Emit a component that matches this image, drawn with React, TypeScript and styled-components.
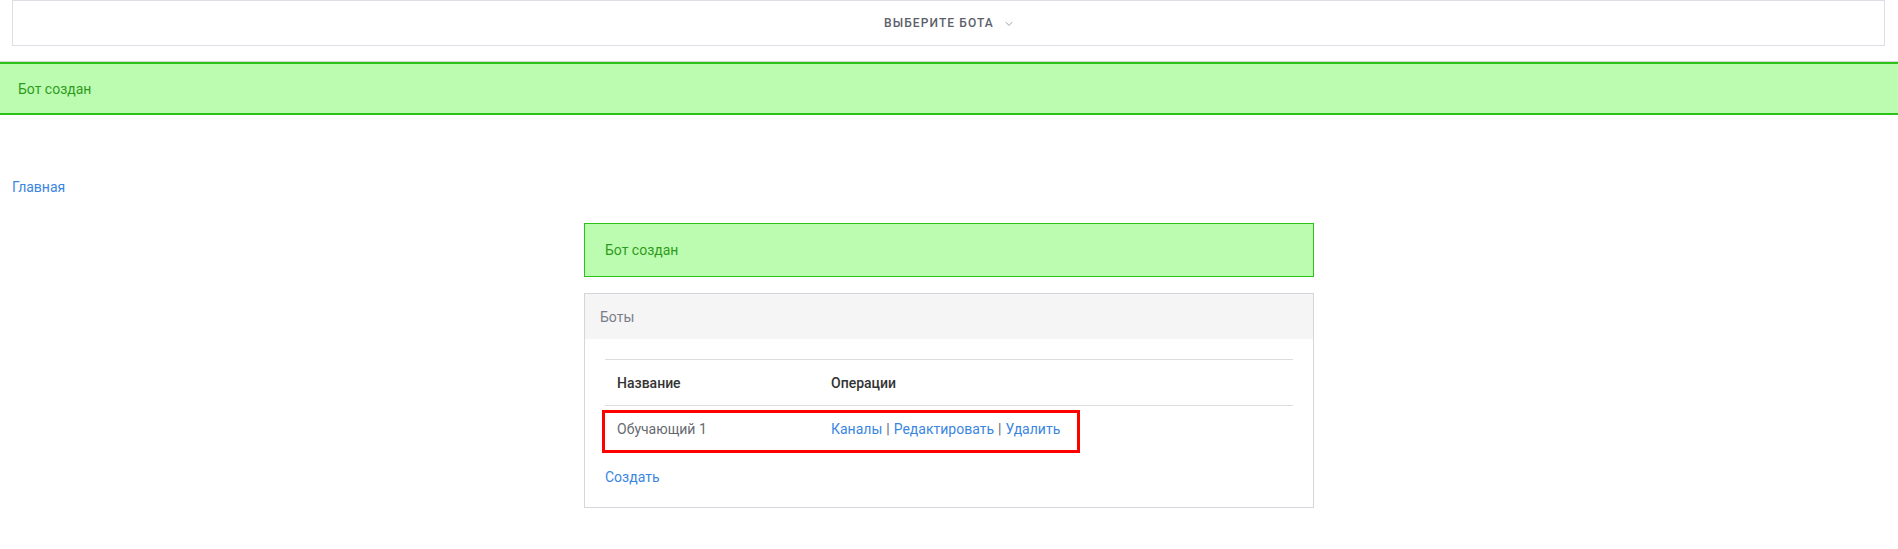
import React from "react";
import styled, { createGlobalStyle } from "styled-components";

const Global = createGlobalStyle`
  html, body { margin: 0; padding: 0; background: #fff; }
  body { font-family: Roboto, "Noto Sans", "Liberation Sans", sans-serif; font-size: 14px; color: #333; }
  * { box-sizing: border-box; }
`;

const TopBar = styled.div`
  margin: 0 13px 0 12px;
  height: 46px;
  border: 1px solid #dcdfe3;
  display: flex;
  align-items: center;
  justify-content: center;
  gap: 11px;
`;

const BotSelect = styled.span`
  font-size: 12px;
  font-weight: 500;
  letter-spacing: 1.1px;
  text-transform: uppercase;
  color: #5b606b;
  line-height: 1;
`;

const Chevron = styled.svg`
  width: 8px;
  height: 6px;
  margin-top: 1px;
`;

const Flash = styled.div`
  margin-top: 16px;
  height: 53px;
  background: #bcfcb0;
  border-top: 2px solid #2cc21a;
  border-bottom: 2px solid #2cc21a;
  box-shadow: 0 -1px 0 #d6d6d6;
  display: flex;
  align-items: center;
  padding-left: 18px;
  color: #2f9b1c;
`;

const Breadcrumb = styled.a`
  display: block;
  margin: 62px 0 0 12px;
  width: max-content;
  line-height: 20px;
  color: #3a86df;
  text-decoration: none;
`;

const Container = styled.div`
  width: 730px;
  margin: 26px auto 0;
  display: flex;
  flex-direction: column;
  gap: 16px;
`;

const Alert = styled.div`
  height: 54px;
  background: #bcfcb0;
  border: 1px solid #2cc21a;
  display: flex;
  align-items: center;
  padding-left: 20px;
  color: #2f9b1c;
`;

const Panel = styled.div`
  border: 1px solid #d3d6da;
`;

const PanelHeading = styled.div`
  height: 45px;
  background: #f5f5f5;
  display: flex;
  align-items: center;
  padding-left: 15px;
  color: #7a7e88;
`;

const PanelBody = styled.div`
  padding: 20px;
`;

const Table = styled.div`
  position: relative;
  border-top: 1px solid #dddddd;
`;

const Row = styled.div<{ $head?: boolean }>`
  display: grid;
  grid-template-columns: 214px 1fr;
  height: ${(p) => (p.$head ? "46px" : "45px")};
  align-items: center;
  border-bottom: ${(p) => (p.$head ? "1px solid #dddddd" : "none")};
  color: ${(p) => (p.$head ? "#333" : "#666a70")};
  font-weight: ${(p) => (p.$head ? 500 : 400)};
`;

const Cell = styled.div`
  padding-left: 12px;
  white-space: nowrap;
`;

const Link = styled.a`
  color: #3a86df;
  text-decoration: none;
`;

const Sep = styled.span`
  color: #666a70;
  margin: 0 4px;
`;

const Highlight = styled.div`
  position: absolute;
  left: -3px;
  top: 50px;
  width: 478px;
  height: 43px;
  border: 3px solid #ff0000;
  pointer-events: none;
`;

const CreateLink = styled(Link)`
  display: inline-block;
  margin-top: 16px;
  line-height: 20px;
`;

export default function App() {
  return (
    <>
      <Global />
      <TopBar>
        <BotSelect>Выберите бота</BotSelect>
        <Chevron viewBox="0 0 8 6">
          <path d="M0.8 1.2 L4 4.4 L7.2 1.2" fill="none" stroke="#9a9ea6" strokeWidth="1" />
        </Chevron>
      </TopBar>
      <Flash>Бот создан</Flash>
      <Breadcrumb href="#">Главная</Breadcrumb>
      <Container>
        <Alert>Бот создан</Alert>
        <Panel>
          <PanelHeading>Боты</PanelHeading>
          <PanelBody>
            <Table>
              <Row $head>
                <Cell>Название</Cell>
                <Cell>Операции</Cell>
              </Row>
              <Row>
                <Cell>Обучающий 1</Cell>
                <Cell>
                  <Link href="#">Каналы</Link>
                  <Sep>|</Sep>
                  <Link href="#">Редактировать</Link>
                  <Sep>|</Sep>
                  <Link href="#">Удалить</Link>
                </Cell>
              </Row>
              <Highlight />
            </Table>
            <CreateLink href="#">Создать</CreateLink>
          </PanelBody>
        </Panel>
      </Container>
    </>
  );
}
